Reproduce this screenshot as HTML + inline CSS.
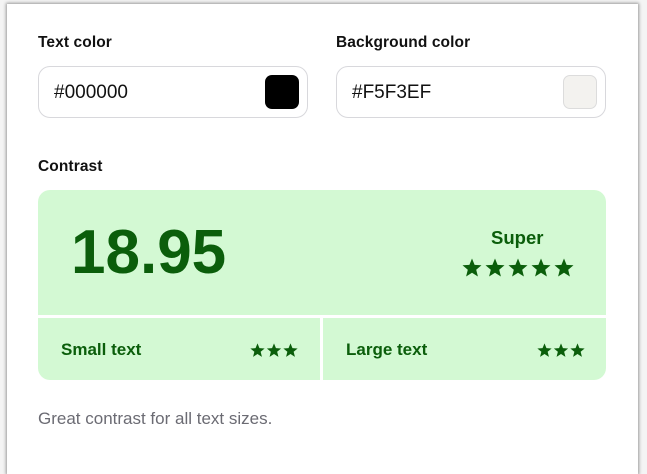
<!DOCTYPE html>
<html><head><style>
body{margin:0;width:647px;height:459px;background:#f4f4f4;font-family:"Liberation Sans",sans-serif;overflow:hidden;position:relative}
.card{position:absolute;left:7px;top:4px;width:631px;height:470px;background:#fff;box-shadow:0 0 3px 1px #999}
.abs{position:absolute}
.lbl{font-size:15.5px;color:#111;font-weight:bold;letter-spacing:0.1px}
.inp{position:absolute;top:66px;width:268px;height:50px;border:1px solid #d8d8dc;border-radius:12px;background:#fff}
.inp span{position:absolute;left:15px;top:15px;font-size:19px;color:#111}
.sw{position:absolute;right:8px;top:8px;width:34px;height:34px;border-radius:7px}
.g{color:#0b5e0b}
svg{display:block;position:absolute}
</style></head><body>
<svg width="0" height="0"><defs><path id="st" d="M10 0.5 L12.6 6.9 L19.5 7.3 L14.2 11.7 L15.9 18.5 L10 14.7 L4.1 18.5 L5.8 11.7 L0.5 7.3 L7.4 6.9 Z" fill="#0b5e0b"/></defs></svg>
<div class="card"></div>
<div class="abs lbl" style="left:38px;top:34px">Text color</div>
<div class="abs lbl" style="left:336px;top:34px">Background color</div>
<div class="inp" style="left:38px"><span>#000000</span><div class="sw" style="background:#000"></div></div>
<div class="inp" style="left:336px"><span>#F5F3EF</span><div class="sw" style="background:#f3f2ef;border:1px solid #dcdcdc;width:32px;height:32px"></div></div>
<div class="abs lbl" style="left:38px;top:158px">Contrast</div>
<div class="abs" style="left:38px;top:190px;width:568px;height:190px;background:#d3f9d3;border-radius:12px;overflow:hidden">
 <div class="abs" style="left:0;top:125px;width:568px;height:3px;background:#fff"></div>
 <div class="abs" style="left:282px;top:125px;width:3px;height:70px;background:#fff"></div>
 <div class="abs g" style="left:33px;top:27px;font-size:62px;font-weight:bold;letter-spacing:0px">18.95</div>
 <div class="abs g" style="left:453px;top:37px;font-size:18.5px;font-weight:bold">Super</div>
 <svg style="left:424px;top:68px" width="112" height="20" viewBox="0 0 112 20"><use href="#st"/><use href="#st" x="23"/><use href="#st" x="46"/><use href="#st" x="69"/><use href="#st" x="92"/></svg>
 <div class="abs g" style="left:23px;top:150px;font-size:17px;font-weight:bold">Small text</div>
 <svg style="left:212px;top:153px" width="48" height="15" viewBox="0 0 64 20"><use href="#st"/><use href="#st" x="22"/><use href="#st" x="44"/></svg>
 <div class="abs g" style="left:308px;top:150px;font-size:17px;font-weight:bold">Large text</div>
 <svg style="left:499px;top:153px" width="48" height="15" viewBox="0 0 64 20"><use href="#st"/><use href="#st" x="22"/><use href="#st" x="44"/></svg>
</div>
<div class="abs" style="left:38px;top:409px;font-size:17px;color:#6b6b73">Great contrast for all text sizes.</div>
</body></html>
